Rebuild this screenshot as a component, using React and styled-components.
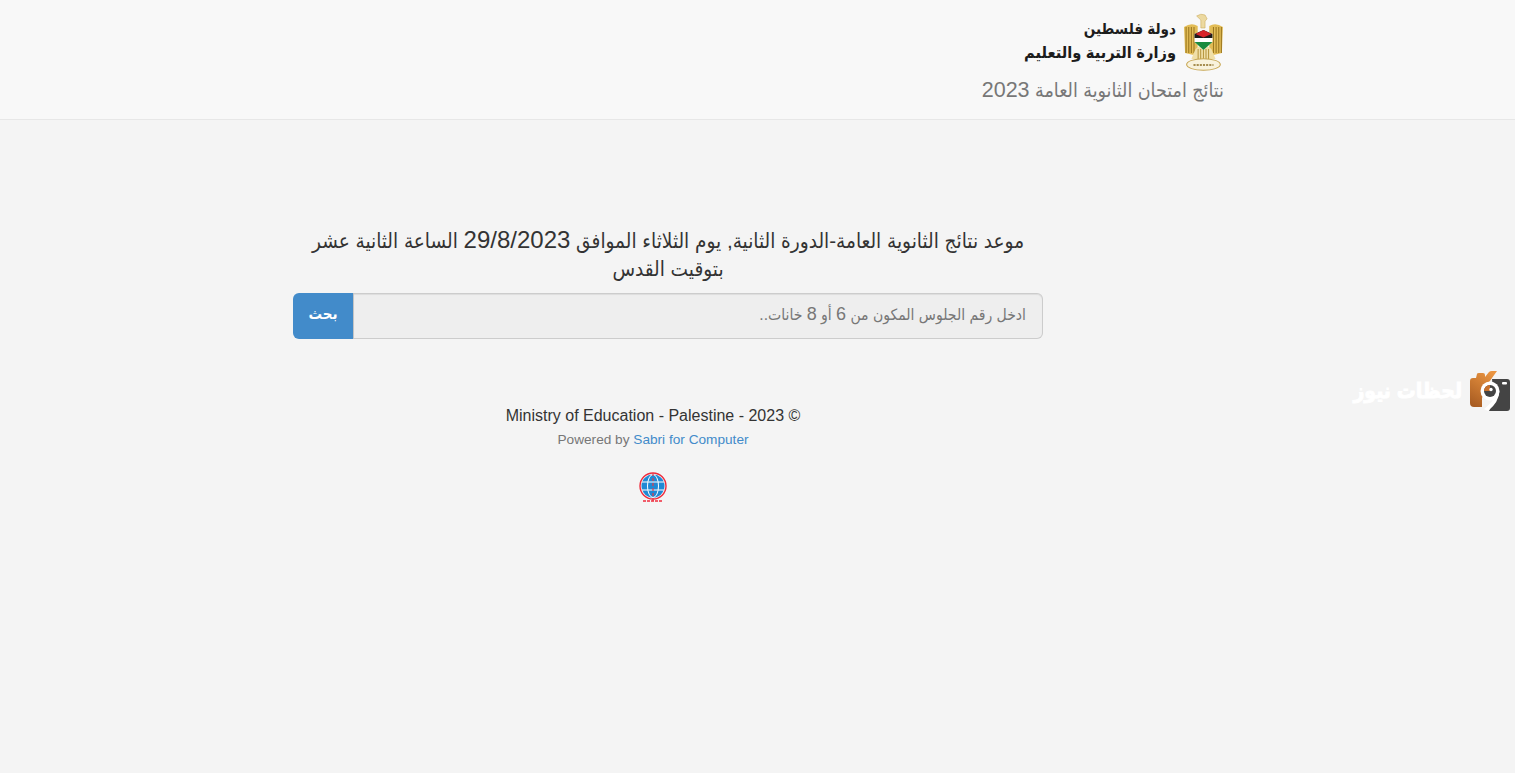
import React from 'react';
import styled, { createGlobalStyle } from 'styled-components';

const GlobalStyle = createGlobalStyle`
  html, body {
    margin: 0;
    padding: 0;
    height: 100%;
    background: #f4f4f4;
    font-family: "Liberation Sans", "DejaVu Sans Condensed", "DejaVu Sans", sans-serif;
    color: #333;
  }
`;

const Page = styled.div`
  position: relative;
  height: 773px;
  overflow: hidden;
  background: #f4f4f4;
`;

const Navbar = styled.header`
  box-sizing: border-box;
  height: 120px;
  padding: 13px 291px 0 0;
  background: #f8f8f8;
  border-bottom: 1px solid #e7e7e7;
  display: flex;
  flex-direction: column;
  align-items: flex-end;
`;

const Brand = styled.div`
  display: flex;
  align-items: flex-start;
  gap: 8px;
  height: 59px;
`;

const BrandText = styled.div`
  direction: rtl;
  padding-top: 4px;
  color: #1c1c1c;
  font-weight: 700;
`;

const BrandLine = styled.div`
  font-size: ${(p) => p.$size}px;
  line-height: ${(p) => p.$line}px;
  white-space: nowrap;
`;

const NavTitle = styled.div`
  direction: rtl;
  margin-top: 4px;
  font-size: 19.5px;
  line-height: 28px;
  color: #777;
  white-space: nowrap;
`;

// the digits run larger than the arabic text around them
const Num = styled.span`
  font-size: ${(p) => p.$size}px;
  line-height: 1;
`;

const Column = styled.main`
  width: 750px;
  margin: 107px 0 0 293px;
`;

const Notice = styled.h3`
  direction: rtl;
  margin: 0 0 10px;
  padding: 0 10px;
  font-size: 20.6px;
  line-height: 28px;
  font-weight: 400;
  text-align: center;
`;

const SearchGroup = styled.form`
  display: flex;
  height: 46px;
  margin: 0;
`;

const SearchButton = styled.button`
  box-sizing: border-box;
  width: 61px;
  border: 0;
  border-right: 1px solid #c4c4c4;
  border-radius: 6px 0 0 6px;
  background: #428bca;
  color: #fff;
  font-family: inherit;
  font-size: 15px;
  font-weight: 700;
  padding: 0 0 5px;
`;

const InputWrap = styled.div`
  position: relative;
  flex: 1;
  min-width: 0;
  display: flex;
`;

const SearchInput = styled.input`
  box-sizing: border-box;
  width: 100%;
  direction: rtl;
  padding: 0 16px;
  background: #eee;
  border: 1px solid #ccc;
  border-left: 0;
  border-radius: 0 6px 6px 0;
  box-shadow: inset 0 1px 1px rgba(0, 0, 0, 0.075);
  font-family: inherit;
  font-size: 16px;
  outline: none;
`;

const InputHint = styled.span`
  position: absolute;
  top: 11px;
  right: 17px;
  direction: rtl;
  font-size: 15.6px;
  line-height: 22px;
  color: #777;
  white-space: nowrap;
  pointer-events: none;
`;

const Footer = styled.footer`
  width: 720px;
  margin-top: 66px;
  text-align: center;
`;

const Copyright = styled.div`
  font-size: 16px;
  line-height: 22px;
  color: #333;
`;

const Powered = styled.div`
  margin-top: 3px;
  font-size: 13.65px;
  line-height: 20px;
  color: #777;
`;

const FooterLink = styled.a`
  color: #428bca;
  text-decoration: none;
`;

const GlobeWrap = styled.div`
  margin-top: 22px;
  display: flex;
  justify-content: center;
`;

const Watermark = styled.div`
  position: absolute;
  top: 371px;
  right: 5px;
  display: flex;
  align-items: center;
  gap: 8px;
`;

const WatermarkText = styled.span`
  direction: rtl;
  color: #fff;
  font-size: 21px;
  font-weight: 700;
  line-height: 38px;
  white-space: nowrap;
  -webkit-text-stroke: 0.9px #fff;
`;

function Emblem() {
  const feathers = [1.5, 4, 6.5, 9, 27.5, 30, 32.5, 35];
  const body = [13, 15.5, 18, 20.5, 23];
  return (
    <svg width="40" height="59" viewBox="0 0 38 59" preserveAspectRatio="none" aria-hidden="true">
      <path d="M12 3 Q16 0 20 2 L22 6 L20 8 L20 15 L16 15 L16 7 Z" fill="#ecd9a0" stroke="#c6a550" strokeWidth="0.5" />
      <path d="M0 14 Q7 9 13 13 L13 36 L9 42 L1 40 L0.5 26 Z" fill="#e2bc56" />
      <path d="M37 14 Q30 9 24 13 L24 36 L28 42 L36 40 L36.5 26 Z" fill="#e2bc56" />
      {feathers.map((x) => (
        <rect key={x} x={x} y="14" width="1" height="26" fill="#9c7820" />
      ))}
      <path d="M11 36 L18.5 30 L26 36 L30 46 L7 46 Z" fill="#f0dfa8" />
      {body.map((x) => (
        <rect key={x} x={x} y="36" width="0.8" height="10" fill="#a98526" />
      ))}
      <path d="M10 21 L18.5 17 L27 21 L27 29 L18.5 37 L10 29 Z" fill="#fff" />
      <path d="M10 21 L18.5 17 L27 21 L27 25 L10 25 Z" fill="#1b1b1b" />
      <path d="M10 29 L27 29 L18.5 37 Z" fill="#1a8a3e" />
      <path d="M11 21 L18.5 17 L26 21 L18.5 24.5 Z" fill="#d8232a" />
      <ellipse cx="18.5" cy="51.5" rx="16" ry="5.8" fill="#f8f2dc" stroke="#c6a550" strokeWidth="1" />
      <path d="M9 52 H28" stroke="#8a6c20" strokeWidth="1.6" strokeDasharray="2 1" />
    </svg>
  );
}

function CameraLogo() {
  return (
    <svg width="40" height="40" viewBox="0 0 40 40" aria-hidden="true">
      <defs>
        <linearGradient id="camOrange" x1="0.7" y1="0" x2="0.2" y2="1">
          <stop offset="0" stopColor="#ea9440" />
          <stop offset="1" stopColor="#a85c22" />
        </linearGradient>
      </defs>
      <path d="M22 8 H37 Q40 8 40 11 V37 Q40 40 37 40 H19 L24 28 Z" fill="#444" />
      <path d="M0 10 Q0 7 3 7 H6 L7 3 Q7 2 9 2 H13 Q15 2 15 4 V6 L19 1 Q20 0 22 0 H27 L17 14 L12 27 V36 H4 Q0 36 0 32 Z" fill="url(#camOrange)" />
      <circle cx="20" cy="20" r="9.5" fill="#fff" />
      <path d="M29.5 20 Q29 31 18 40 L14 38 Q23 31 25 25 Z" fill="#fff" />
      <circle cx="20" cy="20" r="6" fill="#444" />
      <path d="M14 20 A6 6 0 0 1 20 14 L20 20 Z" fill="#c9702a" />
      <circle cx="21" cy="18.5" r="1.7" fill="#fff" />
      <rect x="32" y="11" width="5" height="2.5" rx="1" fill="#fff" />
    </svg>
  );
}

function Globe() {
  return (
    <svg width="30" height="32" viewBox="0 0 30 32" aria-hidden="true">
      <circle cx="15" cy="14" r="11.5" fill="#2089d4" />
      <g fill="none" stroke="#fff" strokeWidth="1">
        <ellipse cx="15" cy="14" rx="5.5" ry="11.5" />
        <path d="M4 10 H26 M4 18 H26" />
      </g>
      <circle cx="15" cy="14" r="13" fill="none" stroke="#ef2b3c" strokeWidth="1.4" />
      <path d="M15 1 V31" stroke="#e23a4a" strokeWidth="1.2" strokeDasharray="3 2" fill="none" />
      <path d="M5 29 H25" stroke="#ef2b3c" strokeWidth="1.4" strokeDasharray="3 1" fill="none" />
    </svg>
  );
}

export default function App() {
  return (
    <Page>
      <GlobalStyle />
      <Navbar>
        <Brand>
          <BrandText>
            <BrandLine $size={15.1} $line={23}>دولة فلسطين</BrandLine>
            <BrandLine $size={16.3} $line={25}>وزارة التربية والتعليم</BrandLine>
          </BrandText>
          <Emblem />
        </Brand>
        <NavTitle>نتائج امتحان الثانوية العامة <Num $size={21.5}>2023</Num></NavTitle>
      </Navbar>
      <Column>
        <Notice>
          موعد نتائج الثانوية العامة-الدورة الثانية, يوم الثلاثاء الموافق <Num $size={24}>29/8/2023</Num> الساعة الثانية عشر بتوقيت القدس
        </Notice>
        <SearchGroup onSubmit={(e) => e.preventDefault()}>
          <SearchButton type="submit">بحث</SearchButton>
          <InputWrap>
            <SearchInput type="text" />
            <InputHint>ادخل رقم الجلوس المكون من <Num $size={18}>6</Num> أو <Num $size={18}>8</Num> خانات..</InputHint>
          </InputWrap>
        </SearchGroup>
        <Footer>
          <Copyright>Ministry of Education - Palestine - 2023 ©</Copyright>
          <Powered>
            Powered by <FooterLink href="#">Sabri for Computer</FooterLink>
          </Powered>
          <GlobeWrap>
            <Globe />
          </GlobeWrap>
        </Footer>
      </Column>
      <Watermark>
        <WatermarkText>لحظات نيوز</WatermarkText>
        <CameraLogo />
      </Watermark>
    </Page>
  );
}
